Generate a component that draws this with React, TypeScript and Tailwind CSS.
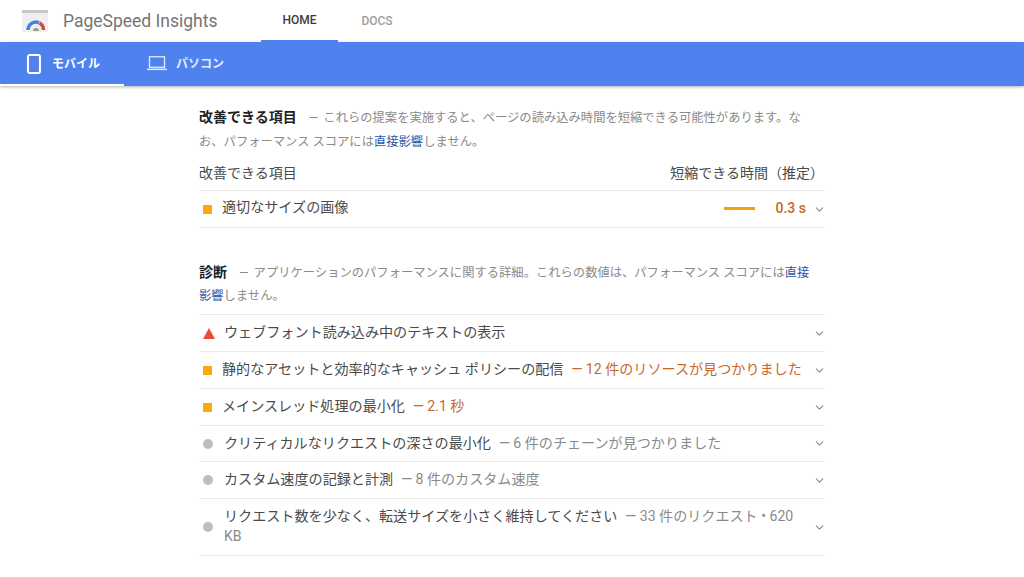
import { ChevronDown } from 'lucide-react'

const font = { fontFamily: '"Roboto", "Noto Sans CJK JP", sans-serif' }

function Marker({ type }: { type: 'fail' | 'average' | 'info' }) {
  if (type === 'fail') {
    return (
      <svg width="12" height="11" viewBox="0 0 12 11" className="shrink-0 ml-[4px] mr-[9px]">
        <polygon points="6,0 12,11 0,11" fill="#eb4a3f" />
      </svg>
    )
  }
  if (type === 'average') {
    return <span className="shrink-0 w-[9px] h-[9px] bg-[#fca90e] ml-[4px] mr-[10px]" />
  }
  return <span className="shrink-0 w-[10px] h-[10px] rounded-full bg-[#bdbdbd] ml-[4px] mr-[11px]" />
}

function Row({
  type,
  title,
  detail,
  tone = 'gray',
  height = 'h-[37px]',
  lead = 'leading-[22px]',
}: {
  type: 'fail' | 'average' | 'info'
  title: string
  detail?: string
  tone?: 'gray' | 'orange'
  height?: string
  lead?: string
}) {
  return (
    <div className={`flex items-center border-b border-[#ebebeb] ${height}`}>
      <Marker type={type} />
      <div className={`flex-1 pb-[2px] text-[14.1px] text-[#4a4a4a] ${lead}`}>
        {title}
        {detail && (
          <span className={`ml-[8px] ${tone === 'orange' ? 'text-[#c8672a]' : 'text-[#8a8a8a]'}`}>
            <span className="font-medium">—</span> {detail}
          </span>
        )}
      </div>
      <ChevronDown size={13} strokeWidth={2} className="shrink-0 ml-[8px] -mr-px text-[#8c8c8c]" />
    </div>
  )
}

export default function App() {
  return (
    <div className="w-[1024px] h-[577px] overflow-hidden bg-white" style={font}>
      <header className="h-[42px] flex items-center">
        <svg width="26" height="22" viewBox="0 0 26 22" className="ml-[22px] mt-[-1px] shrink-0">
          <rect width="26" height="22" fill="#efefef" />
          <rect width="26" height="3" fill="#c9c9c9" />
          <path d="M6 20 A8 8 0 0 1 17 12.6" fill="none" stroke="#4a7fe0" strokeWidth="3.4" />
          <path d="M17.5 13 A8 8 0 0 1 21.5 20" fill="none" stroke="#cf4a3d" strokeWidth="3.4" />
          <path d="M11 21 A3 3 0 0 1 17 21 Z" fill="#9a9a9a" />
        </svg>
        <div className="ml-[15px] w-[198px] text-[17.5px] text-[#757575]">PageSpeed Insights</div>
        <nav className="flex h-full text-[12px] font-medium">
          <div className="w-[77px] flex items-center justify-center text-[#3c3c3c] border-b-2 border-[#4f82ee]">HOME</div>
          <div className="w-[78px] flex items-center justify-center text-[#9e9e9e]">DOCS</div>
        </nav>
      </header>

      <div className="h-[44px] bg-[#4f82ee] flex shadow-[0_1px_3px_rgba(0,0,0,0.3)] text-white text-[12px] font-bold">
        <div className="w-[124px] flex items-center border-b-2 border-white pl-[27px] pt-[2px]">
          <svg width="14" height="20" viewBox="0 0 14 20" className="shrink-0">
            <rect x="1" y="1" width="12" height="18" rx="2" fill="none" stroke="#fff" strokeWidth="2" />
          </svg>
          <span className="ml-[11px]">モバイル</span>
        </div>
        <div className="flex items-center pl-[23px] pb-[1px] text-[#e3ecfd]">
          <svg width="20" height="15" viewBox="0 0 20 15" className="shrink-0">
            <rect x="2.5" y="0.75" width="15" height="10.5" fill="none" stroke="#e3ecfd" strokeWidth="1.3" />
            <rect x="0" y="12.6" width="20" height="1.5" fill="#e3ecfd" />
          </svg>
          <span className="ml-[9px] pt-[1px]">パソコン</span>
        </div>
      </div>

      <main className="w-[626px] mx-auto">
        <section className="pt-[19px]">
          <p className="text-[12.3px] leading-[24px] text-[#8a8a8a] pr-[20px]">
            <span className="text-[14px] font-bold text-[#212121] mr-[12px]">改善できる項目</span>
            —<span className="ml-[5px]">これらの提案を実施すると、ページの読み込み時間を短縮できる可能性があります。なお、パフォーマンス スコアには</span>
            <span className="text-[#2a56a8]">直接影響</span>
            しません。
          </p>
          <div className="flex justify-between items-center h-[37px] pt-[2px] border-b border-[#ebebeb] text-[14px] text-[#4a4a4a] pr-[1px]">
            <span>改善できる項目</span>
            <span>短縮できる時間（推定）</span>
          </div>
          <div className="flex items-center h-[37px] border-b border-[#ebebeb]">
            <Marker type="average" />
            <div className="flex-1 pb-[2px] text-[14.1px] text-[#4a4a4a]">適切なサイズの画像</div>
            <span className="w-[31px] h-[3px] mb-[2px] bg-[#f0a30f]" />
            <span className="w-[51px] pb-[1px] text-right text-[14px] font-medium text-[#c8672a]">0.3 s</span>
            <ChevronDown size={13} strokeWidth={2} className="ml-[7px] -mr-px text-[#8c8c8c]" />
          </div>
        </section>

        <section className="pt-[33px]">
          <p className="text-[12.3px] leading-[23px] text-[#8a8a8a] pr-[14px]">
            <span className="text-[14px] font-bold text-[#212121] mr-[12px]">診断</span>
            —<span className="ml-[5px]">アプリケーションのパフォーマンスに関する詳細。これらの数値は、パフォーマンス スコアには</span>
            <span className="text-[#2a56a8]">直接影響</span>
            しません。
          </p>
          <div className="mt-[6px] border-t border-[#ebebeb]">
            <Row type="fail" title="ウェブフォント読み込み中のテキストの表示" />
            <Row type="average" title="静的なアセットと効率的なキャッシュ ポリシーの配信" detail="12 件のリソースが見つかりました" tone="orange" />
            <Row type="average" title="メインスレッド処理の最小化" detail="2.1 秒" tone="orange" />
            <Row type="info" title="クリティカルなリクエストの深さの最小化" detail="6 件のチェーンが見つかりました" height="h-[36px]" />
            <Row type="info" title="カスタム速度の記録と計測" detail="8 件のカスタム速度" />
            <Row type="info" title="リクエスト数を少なく、転送サイズを小さく維持してください" detail="33 件のリクエスト • 620 KB" height="h-[57px]" lead="leading-[20px]" />
          </div>
        </section>
      </main>
    </div>
  )
}
